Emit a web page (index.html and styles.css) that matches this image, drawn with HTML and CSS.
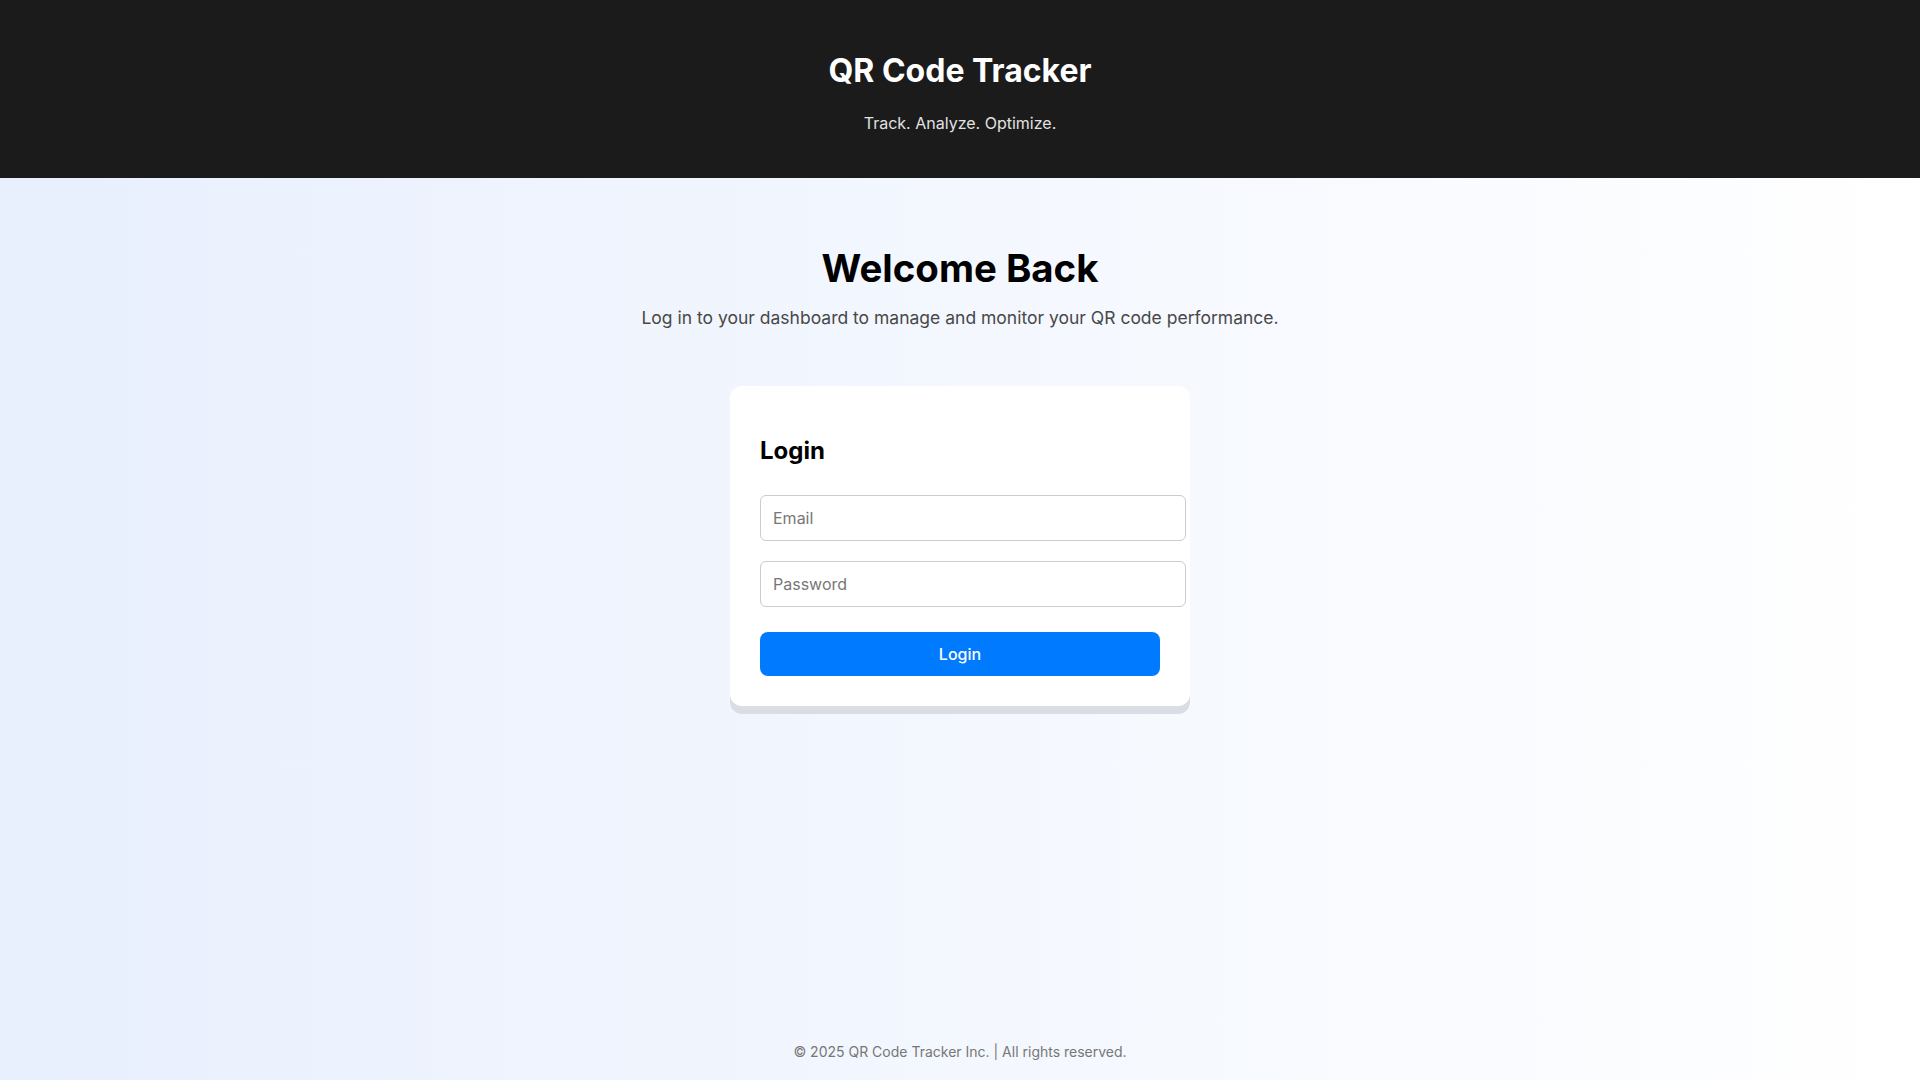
FILE: index.html
```html
<!DOCTYPE html>
<html lang="en">
<head>
    <meta charset="UTF-8">
    <meta name="viewport" content="width=device-width, initial-scale=1.0">
    <title>QR Code Tracker - Login</title>
    <link rel="stylesheet" href="styles.css">
</head>
<body>
    <header class="site-header">
        <h1>QR Code Tracker</h1>
        <p>Track. Analyze. Optimize.</p>
    </header>

    <main class="content">
        <h2 class="welcome">Welcome Back</h2>
        <p class="intro">Log in to your dashboard to manage and monitor your QR code performance.</p>

        <div class="login-card">
            <h3>Login</h3>
            <form class="login-form" onsubmit="return false;">
                <input type="email" id="email" placeholder="Email" required>
                <input type="password" id="password" placeholder="Password" required>
                <button type="submit">Login</button>
            </form>
        </div>
    </main>

    <footer class="site-footer">
        &copy; 2025 QR Code Tracker Inc. | All rights reserved.
    </footer>
</body>
</html>
```

FILE: styles.css
```css
body {
    font-family: Inter, "Noto Sans", sans-serif;
    margin: 0;
    min-height: 100vh;
    display: flex;
    flex-direction: column;
    background: linear-gradient(to right, #e8effd, #ffffff);
    color: #000;
}
.site-header {
    background-color: #1b1b1b;
    color: white;
    text-align: center;
    padding: 30px 20px 29px;
}
.site-header h1 {
    font-size: 32px;
    font-weight: 700;
    margin: 21px 0 23px;
}
.site-header p {
    font-size: 16px;
    color: #e2e2e2;
    margin: 0 0 16px;
}
.content {
    flex: 1;
    display: flex;
    flex-direction: column;
    align-items: center;
    padding-top: 67px;
}
.welcome {
    font-size: 38.4px;
    font-weight: 700;
    margin: 0 0 16px;
}
.intro {
    font-size: 17.5px;
    color: #484848;
    margin: 0 0 58px;
}
.login-card {
    background: white;
    width: 400px;
    padding: 30px;
    border-radius: 12px;
    box-shadow: 0 8px 0 #dadde3;
}
.login-card h3 {
    font-size: 24px;
    font-weight: 700;
    margin: 20px 0 30px;
}
.login-form {
    display: flex;
    flex-direction: column;
    align-items: flex-start;
}
.login-form input {
    width: 100%;
    padding: 12px;
    font-family: inherit;
    font-size: 16px;
    line-height: 20px;
    border: 1px solid #cccccc;
    border-radius: 6px;
    margin: 0 0 20px;
    background: white;
}
.login-form input:last-of-type {
    margin-bottom: 25px;
}
.login-form input::placeholder {
    color: #777;
}
.login-form button {
    width: 100%;
    padding: 12px;
    font-family: inherit;
    font-size: 16px;
    font-weight: 500;
    line-height: 20px;
    color: white;
    background-color: #007bff;
    border: none;
    border-radius: 8px;
    cursor: pointer;
}
.login-form button:hover {
    background-color: #0069d9;
}
.site-footer {
    text-align: center;
    font-size: 14px;
    color: #777;
    padding: 20px;
}
```
